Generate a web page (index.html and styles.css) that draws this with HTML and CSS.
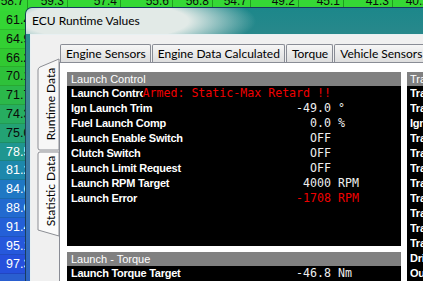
FILE: index.html
```html
<!DOCTYPE html>
<html lang="en">
  <head>
    <meta charset="UTF-8" />
    <meta name="viewport" content="width=device-width, initial-scale=1.0" />
    <title>ECU Runtime Values</title>
    <link rel="stylesheet" href="styles.css">
  </head>
  <body>
    <div class="sheet">
      <div class="sheet-top">
        <span>58.7</span><span>59.3</span><span>57.4</span><span>55.6</span><span>56.8</span>
        <span>54.7</span><span>49.2</span><span>45.1</span><span>41.3</span><span>40.2</span>
      </div>
      <div class="sheet-side">
        <span class="r1">61.4</span>
        <span class="r2">64.9</span>
        <span class="r3">66.2</span>
        <span class="r4">70.1</span>
        <span class="r5">71.7</span>
        <span class="r6">74.3</span>
        <span class="r7">75.0</span>
        <span class="r8">78.5</span>
        <span class="r9">81.2</span>
        <span class="r10">84.6</span>
        <span class="r11">88.0</span>
        <span class="r12">91.4</span>
        <span class="r13">95.1</span>
        <span class="r14">97.3</span>
      </div>
    </div>

    <div class="window">
      <div class="title">ECU Runtime Values</div>
      <div class="client">
        <svg class="side-tabs" width="28" height="250" viewBox="0 0 28 250">
          <path class="tab-off" d="M28 117 L9 117 Q7 117 7 119 L7 195 L28 201 Z" />
          <path class="tab-on" d="M28 24 L9 32 Q7 33 7 35 L7 113 Q7 115 9 115 L28 115 Z" />
          <text x="19" y="69" transform="rotate(-90 19 69)">Runtime Data</text>
          <text x="19" y="156" transform="rotate(-90 19 156)">Statistic Data</text>
        </svg>

        <div class="main">
          <div class="tabs">
            <div class="tab">Engine Sensors</div>
            <div class="tab">Engine Data Calculated</div>
            <div class="tab">Torque</div>
            <div class="tab">Vehicle Sensors</div>
            <div class="tab">Transmission</div>
          </div>

          <div class="pages">
            <div class="col">
              <div class="panel launch">
                <div class="panel-head">Launch Control</div>
                <div class="row">
                  <span class="label">Launch Control Status</span>
                  <span class="value warn">Armed: Static-Max Retard !!</span>
                  <span class="unit"></span>
                </div>
                <div class="row">
                  <span class="label">Ign Launch Trim</span>
                  <span class="value">-49.0</span>
                  <span class="unit">°</span>
                </div>
                <div class="row">
                  <span class="label">Fuel Launch Comp</span>
                  <span class="value">0.0</span>
                  <span class="unit">%</span>
                </div>
                <div class="row">
                  <span class="label">Launch Enable Switch</span>
                  <span class="value">OFF</span>
                  <span class="unit"></span>
                </div>
                <div class="row">
                  <span class="label">Clutch Switch</span>
                  <span class="value">OFF</span>
                  <span class="unit"></span>
                </div>
                <div class="row">
                  <span class="label">Launch Limit Request</span>
                  <span class="value">OFF</span>
                  <span class="unit"></span>
                </div>
                <div class="row">
                  <span class="label">Launch RPM Target</span>
                  <span class="value">4000</span>
                  <span class="unit">RPM</span>
                </div>
                <div class="row">
                  <span class="label">Launch Error</span>
                  <span class="value warn">-1708</span>
                  <span class="unit warn">RPM</span>
                </div>
              </div>

              <div class="panel torque">
                <div class="panel-head">Launch - Torque</div>
                <div class="row">
                  <span class="label">Launch Torque Target</span>
                  <span class="value">-46.8</span>
                  <span class="unit">Nm</span>
                </div>
              </div>
            </div>

            <div class="panel side-panel">
              <div class="panel-head">Traction Control</div>
              <div class="row"><span class="label">Traction Enable</span></div>
              <div class="row"><span class="label">Traction Slip</span></div>
              <div class="row"><span class="label">Ign Traction Retard</span></div>
              <div class="row"><span class="label">Traction Mode</span></div>
              <div class="row"><span class="label">Traction Target</span></div>
              <div class="row"><span class="label">Traction Error</span></div>
              <div class="row"><span class="label">Traction Gain P</span></div>
              <div class="row"><span class="label">Traction Gain I</span></div>
              <div class="row"><span class="label">Traction Gain D</span></div>
              <div class="row"><span class="label">Traction Limit</span></div>
              <div class="row"><span class="label">Traction Cut</span></div>
              <div class="row"><span class="label">Driven Wheel Speed</span></div>
              <div class="row"><span class="label">Output Torque</span></div>
            </div>
          </div>
        </div>
      </div>
    </div>
  </body>
</html>
```

FILE: styles.css
```css
body {
  margin: 0;
  width: 423px;
  height: 281px;
  overflow: hidden;
  position: relative;
  background: #2a5fd0;
  font-family: "Liberation Sans", Arial, sans-serif;
}

/* data grid behind the window */
.sheet-top {
  display: grid;
  grid-template-columns: 28px 40px 53px 52px 40px 38px 48px 45px 49px 40px;
  height: 19px;
  margin-top: -8px;
  background: #35d835;
}

.sheet-top span {
  text-align: right;
  padding-right: 3px;
  border-right: 1px solid #1e9e1e;
  font-size: 12px;
  line-height: 19px;
  color: #0a0a0a;
}

.sheet-side {
  display: flex;
  flex-direction: column;
  width: 30px;
}

.sheet-side span {
  height: 18.8px;
  line-height: 18.8px;
  padding-left: 6px;
  font-size: 12.5px;
  white-space: nowrap;
  overflow: hidden;
  box-sizing: border-box;
  border-bottom: 1px solid rgba(0, 0, 0, 0.12);
  color: #0a0a0a;
}

.r1 { background: #34d634; }
.r2 { background: #33d033; }
.r3 { background: #31c931; }
.r4 { background: #2ec13a; }
.r5 { background: #2bb84a; }
.r6 { background: #27ad60; }
.r7 { background: #23a274; }
.r8 { background: #1f9690; color: #fff !important; }
.r9 { background: #1d88ac; color: #fff !important; }
.r10 { background: #1f78c4; color: #fff !important; }
.r11 { background: #226ad0; color: #fff !important; }
.r12 { background: #2460d8; color: #fff !important; }
.r13 { background: #2658dc; color: #fff !important; }
.r14 { background: #2650dc; color: #fff !important; }

/* the window */
.window {
  position: absolute;
  left: 25px;
  top: 7px;
  width: 420px;
  height: 290px;
  box-sizing: border-box;
  border: 1px solid rgba(20, 50, 70, 0.8);
  border-radius: 7px 7px 0 0;
  background: linear-gradient(180deg, #1c878a 0%, #3d8a8e 25%, #3f7fa0 50%, #3570bc 75%, #2c5fc4 100%);
  overflow: hidden;
}

.title {
  height: 26px;
  line-height: 26px;
  padding-left: 6px;
  font-family: Lato, "Open Sans", sans-serif;
  font-size: 12px;
  color: #000;
  background: radial-gradient(ellipse 150px 34px at 80px 13px, rgba(226, 234, 231, 1) 55%, rgba(226, 234, 231, 0) 100%);
}

.client {
  display: flex;
  margin-left: 4px;
  height: 270px;
  background: #f0f0f0;
  border-top: 1px solid #e8f0f2;
  border-left: 1px solid #e8f0f2;
}

.side-tabs {
  flex-shrink: 0;
  overflow: visible;
}

.side-tabs path {
  stroke: #8c8e94;
  stroke-width: 1;
}

.tab-on {
  fill: #f7f7f7;
}

.tab-off {
  fill: #fbfbfb;
}

.side-tabs text {
  font-family: Lato, "Open Sans", sans-serif;
  font-size: 12px;
  fill: #000;
  text-anchor: middle;
  dominant-baseline: central;
}

.main {
  flex: 1;
  display: flex;
  flex-direction: column;
  min-width: 0;
}

.tabs {
  display: flex;
  margin-top: 9px;
  margin-left: 1px;
  gap: 1px;
}

.tab {
  height: 18px;
  box-sizing: border-box;
  padding: 0 4px 0 5px;
  border: 1px solid #898c95;
  border-bottom: none;
  border-radius: 2px 2px 0 0;
  background: linear-gradient(#f6f6f6, #dedede);
  font-family: Lato, "Open Sans", sans-serif;
  font-size: 12px;
  line-height: 17px;
  white-space: nowrap;
}

.pages {
  flex: 1;
  display: flex;
  gap: 6px;
  align-items: flex-start;
  padding: 9px 0 0 7px;
  background: #fff;
  border-top: 1px solid #898c95;
  border-left: 1px solid #898c95;
}

.col {
  width: 334px;
  flex-shrink: 0;
  display: flex;
  flex-direction: column;
  gap: 6px;
}

.panel {
  background: #000;
  color: #fff;
}

.launch {
  height: 174px;
}

.torque {
  height: 60px;
}

.side-panel {
  width: 200px;
  height: 230px;
  flex-shrink: 0;
}

.panel-head {
  height: 14px;
  line-height: 14px;
  padding-left: 4px;
  background: #808080;
  font-size: 11px;
  color: #fff;
  white-space: nowrap;
}

.side-panel .panel-head,
.side-panel .row {
  padding-left: 3px;
}

.row {
  display: flex;
  height: 15px;
  line-height: 15px;
  padding-left: 4px;
}

.label {
  flex: 1;
  min-width: 0;
  overflow: hidden;
  white-space: nowrap;
  font-weight: bold;
  font-size: 11px;
  letter-spacing: -0.25px;
}

.value {
  font-family: "DejaVu Sans Mono", monospace;
  font-size: 11.6px;
  white-space: pre;
  color: #eeeeee;
  background: #000;
}

.unit {
  width: 70px;
  box-sizing: border-box;
  padding-left: 7px;
  font-family: "DejaVu Sans Mono", monospace;
  font-size: 11.6px;
  color: #eeeeee;
}

.warn {
  color: #f00000;
}
```
